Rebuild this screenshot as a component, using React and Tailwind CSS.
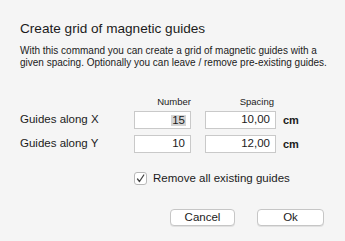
import React from "react";

export default function App() {
  return (
    <div className="w-[345px] h-[241px] bg-[#f5f5f5] font-['Liberation_Sans',Arial,sans-serif] text-[#1b1b1b] pl-5 pt-[21px] overflow-hidden">
      <h1 className="text-[13.6px] leading-4 whitespace-nowrap">Create grid of magnetic guides</h1>
      <p className="mt-2 text-[10px] leading-[12px] whitespace-nowrap">
        With this command you can create a grid of magnetic guides with a
        <br />
        given spacing. Optionally you can leave / remove pre-existing guides.
      </p>

      <div className="mt-[27px] flex h-3 text-[9.5px] leading-3">
        <div className="w-[114px]" />
        <div className="w-[57px] text-right">Number</div>
        <div className="w-[71px] ml-[14px] text-right pr-[2px]">Spacing</div>
      </div>

      <div className="mt-[3px] flex items-center h-[18px] text-[11.5px]">
        <div className="w-[114px]">Guides along X</div>
        <div className="w-[57px] h-[18px] bg-white border border-[#c9c9c9] flex items-center justify-end pr-[4px] text-[11.5px]">
          <span className="bg-[#d5d5d5] leading-[11px] px-[1px]">15</span>
        </div>
        <div className="w-[71px] ml-[14px] h-[18px] bg-white border border-[#c9c9c9] flex items-center justify-end pr-[5px] text-[11.5px]">10,00</div>
        <div className="ml-[7px] font-bold text-[11px]">cm</div>
      </div>

      <div className="mt-[6px] flex items-center h-[18px] text-[11.5px]">
        <div className="w-[114px]">Guides along Y</div>
        <div className="w-[57px] h-[18px] bg-white border border-[#c9c9c9] flex items-center justify-end pr-[5px] text-[11.5px]">10</div>
        <div className="w-[71px] ml-[14px] h-[18px] bg-white border border-[#c9c9c9] flex items-center justify-end pr-[5px] text-[11.5px]">12,00</div>
        <div className="ml-[7px] font-bold text-[11px]">cm</div>
      </div>

      <div className="mt-[19px] flex items-center h-[13px] ml-[114px] text-[11.5px]">
        <div className="w-[13px] h-[13px] bg-white border border-[#b8b8b8] rounded-[3px] flex items-center justify-center">
          <svg width="9" height="9" viewBox="0 0 9 9" fill="none">
            <path d="M1.5 5 L3.5 7.5 L7.8 1" stroke="#444" strokeWidth="1.3" strokeLinecap="round" strokeLinejoin="round" />
          </svg>
        </div>
        <span className="ml-[6px]">Remove all existing guides</span>
      </div>

      <div className="mt-[24px] flex ml-[150px] text-[11.5px]">
        <button className="w-[65px] h-[17px] bg-white border border-[#c6c6c6] rounded-[4px] shadow-[0_1px_0_rgba(0,0,0,0.08)] flex items-center justify-center leading-none">Cancel</button>
        <button className="ml-[22px] w-[67px] h-[17px] bg-white border border-[#c6c6c6] rounded-[4px] shadow-[0_1px_0_rgba(0,0,0,0.08)] flex items-center justify-center leading-none">Ok</button>
      </div>
    </div>
  );
}
